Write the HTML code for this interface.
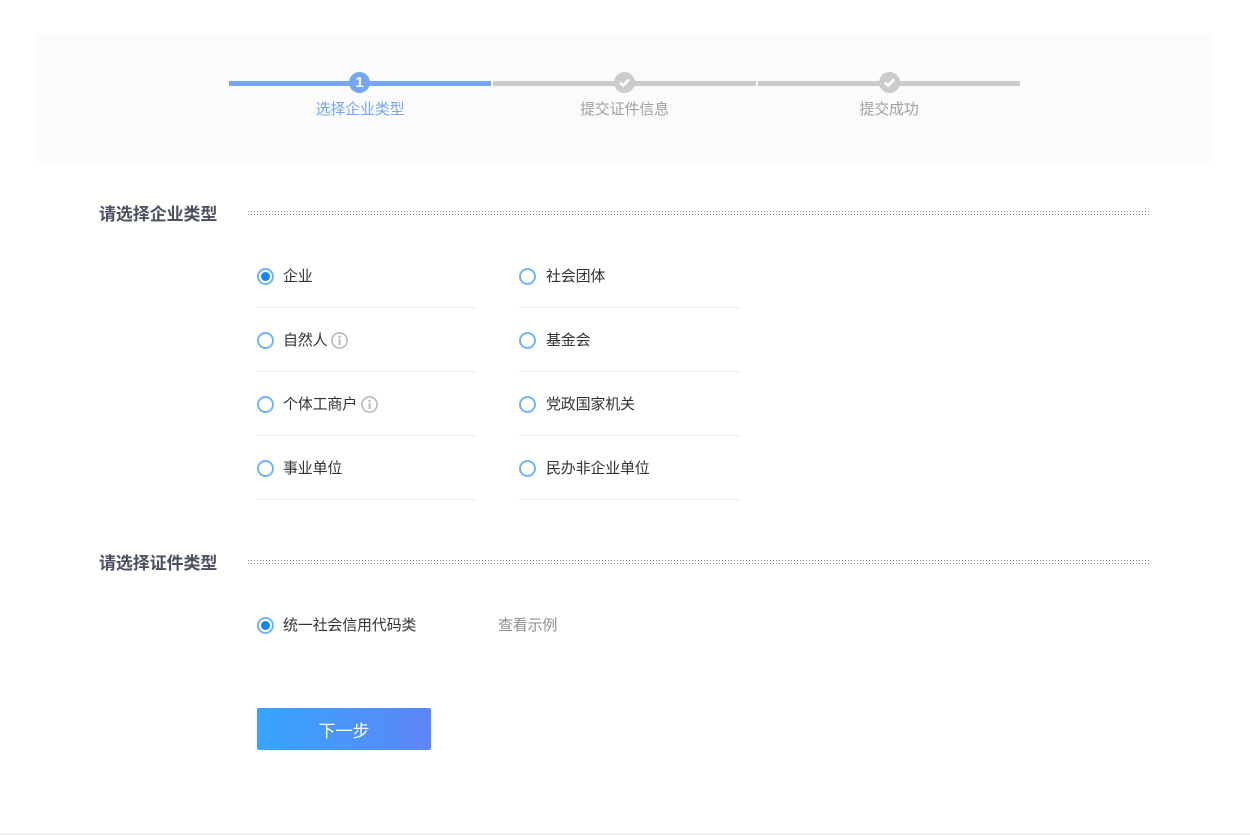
<!DOCTYPE html>
<html lang="zh">
<head>
<meta charset="utf-8">
<style>
html,body{margin:0;padding:0;background:#fff;}
body{width:1250px;height:835px;position:relative;overflow:hidden;font-family:"Liberation Sans","WenQuanYi Zen Hei","Noto Sans CJK SC",sans-serif;}
.a{position:absolute;}
.t{position:absolute;white-space:nowrap;font-size:15px;line-height:20px;color:#333;font-family:"Noto Sans CJK SC","Liberation Sans",sans-serif;font-weight:400;letter-spacing:-0.2px;}
.r{position:absolute;width:17px;height:17px;box-sizing:border-box;border:2px solid #6fb5f8;border-radius:50%;background:#fff;}
.r.on:after{content:"";position:absolute;left:2px;top:2px;width:9px;height:9px;border-radius:50%;background:#1584f5;}
.l{position:absolute;height:1px;background:#ececec;}
.h{position:absolute;white-space:nowrap;font-size:17px;line-height:22px;font-weight:700;color:#4a5060;font-family:"Noto Sans CJK SC","Liberation Sans",sans-serif;letter-spacing:-0.1px;}
.d{position:absolute;left:248px;width:901px;height:4px;background-image:linear-gradient(90deg,#8a8a8a 1px,transparent 1px),linear-gradient(90deg,#8a8a8a 1px,transparent 1px);background-size:3px 1px,3px 1px;background-position:0 0,0 3px;background-repeat:repeat-x;}
.bar{position:absolute;height:5px;top:81px;background:#cbcbcb;}
.c{position:absolute;top:72px;width:21px;height:21px;border-radius:50%;background:#cbcbcb;}
.s{position:absolute;top:99px;white-space:nowrap;font-size:15px;line-height:20px;color:#a0a0a0;font-family:"Noto Sans CJK SC","Liberation Sans",sans-serif;font-weight:400;letter-spacing:-0.2px;transform:translateX(-50%);}
</style>
</head>
<body>
<div class="a" style="left:36px;top:34px;width:1176px;height:128px;background:#fbfbfb;"></div>

<div class="bar" style="left:229px;width:262px;background:#74a6f2;"></div>
<div class="bar" style="left:493px;width:263px;"></div>
<div class="bar" style="left:758px;width:262px;"></div>

<div class="c" style="left:349px;background:#74a6f2;color:#fff;font:700 15px/21px 'Liberation Sans',sans-serif;text-align:center;">1</div>
<div class="c" style="left:614px;"><svg width="21" height="21" viewBox="0 0 21 21"><path d="M6 10.6l3.1 3L15 7.4" fill="none" stroke="#fff" stroke-width="2.6"/></svg></div>
<div class="c" style="left:879px;"><svg width="21" height="21" viewBox="0 0 21 21"><path d="M6 10.6l3.1 3L15 7.4" fill="none" stroke="#fff" stroke-width="2.6"/></svg></div>

<div class="s" style="left:360px;color:#74a6f2;">选择企业类型</div>
<div class="s" style="left:624.5px;">提交证件信息</div>
<div class="s" style="left:889px;">提交成功</div>

<div class="h" style="left:99px;top:202px;">请选择企业类型</div>
<div class="d" style="top:211px;"></div>

<div class="r on" style="left:257px;top:268px;"></div><div class="t" style="left:283px;top:266px;">企业</div>
<div class="l" style="left:257px;top:307px;width:219px;"></div>
<div class="r" style="left:257px;top:332px;"></div><div class="t" style="left:283px;top:330px;">自然人</div>
<svg class="a" style="left:331px;top:332px;" width="17" height="17" viewBox="0 0 17 17"><circle cx="8.5" cy="8.5" r="7.6" fill="none" stroke="#b4b4b4" stroke-width="1.5"/><rect x="7.4" y="3.8" width="2.2" height="2.2" fill="#b4b4b4"/><path d="M7.6 7h1.9v6H7.6z" fill="#b4b4b4"/></svg>
<div class="l" style="left:257px;top:371px;width:219px;"></div>
<div class="r" style="left:257px;top:396px;"></div><div class="t" style="left:283px;top:394px;">个体工商户</div>
<svg class="a" style="left:361px;top:396px;" width="17" height="17" viewBox="0 0 17 17"><circle cx="8.5" cy="8.5" r="7.6" fill="none" stroke="#b4b4b4" stroke-width="1.5"/><rect x="7.4" y="3.8" width="2.2" height="2.2" fill="#b4b4b4"/><path d="M7.6 7h1.9v6H7.6z" fill="#b4b4b4"/></svg>
<div class="l" style="left:257px;top:435px;width:219px;"></div>
<div class="r" style="left:257px;top:460px;"></div><div class="t" style="left:283px;top:458px;">事业单位</div>
<div class="l" style="left:257px;top:499px;width:219px;"></div>

<div class="r" style="left:519px;top:268px;"></div><div class="t" style="left:546px;top:266px;">社会团体</div>
<div class="l" style="left:519px;top:307px;width:221px;"></div>
<div class="r" style="left:519px;top:332px;"></div><div class="t" style="left:546px;top:330px;">基金会</div>
<div class="l" style="left:519px;top:371px;width:221px;"></div>
<div class="r" style="left:519px;top:396px;"></div><div class="t" style="left:546px;top:394px;">党政国家机关</div>
<div class="l" style="left:519px;top:435px;width:221px;"></div>
<div class="r" style="left:519px;top:460px;"></div><div class="t" style="left:546px;top:458px;">民办非企业单位</div>
<div class="l" style="left:519px;top:499px;width:221px;"></div>

<div class="h" style="left:99px;top:551px;">请选择证件类型</div>
<div class="d" style="top:560px;"></div>

<div class="r on" style="left:257px;top:617px;"></div><div class="t" style="left:283px;top:615px;">统一社会信用代码类</div>
<div class="t" style="left:498px;top:615px;color:#8f8f8f;">查看示例</div>

<div class="a" style="left:257px;top:708px;width:174px;height:42px;border-radius:2px;background:linear-gradient(90deg,#35a5fe,#5f85f6);color:#fff;text-align:center;font:400 17px/43px 'Noto Sans CJK SC','Liberation Sans',sans-serif;">下一步</div>

<div class="a" style="left:0;top:833px;width:1250px;height:2px;background:#f3f3f3;"></div>
</body>
</html>
